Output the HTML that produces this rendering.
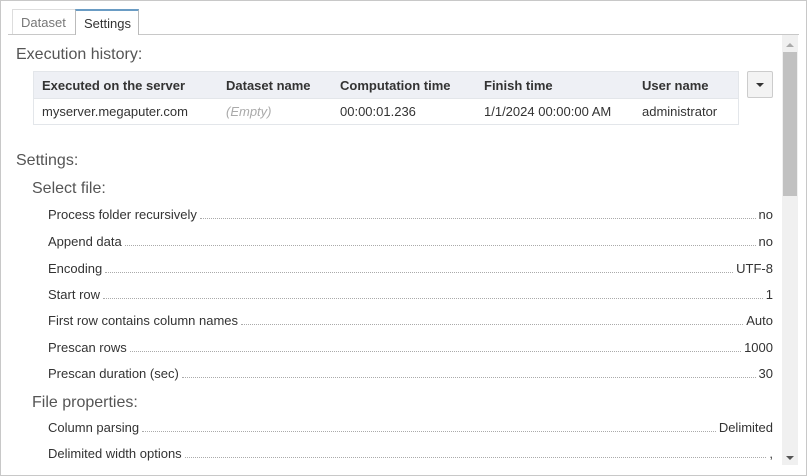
<!DOCTYPE html>
<html><head><style>
body{margin:0;width:807px;height:476px;overflow:hidden;background:#fff;font-family:"Liberation Sans",sans-serif;color:#333;}
.frame{position:absolute;left:0;top:0;width:805px;height:474px;border:1px solid #c8c8c8;}
.tab{position:absolute;top:9px;height:25px;line-height:25px;font-size:13px;padding:0 8px;box-sizing:border-box;}
.t1{left:12px;width:64px;color:#777;border:1px solid #ddd;border-bottom:none;}
.t2{left:75px;width:64px;color:#333;border:1px solid #bbb;border-top:2px solid #6a9cc4;border-bottom:none;background:#fff;z-index:2;height:26px;}
.tline{position:absolute;left:8px;right:8px;top:34px;border-top:1px solid #c8c8c8;}
.h{position:absolute;font-size:16px;color:#555;}
table{position:absolute;left:33px;top:71px;width:706px;border-collapse:collapse;font-size:13px;}
th{background:#eef0f5;text-align:left;font-weight:bold;height:26px;padding:0 0 0 8px;border-top:1px solid #e3e6ea;}
td{height:25px;padding:0 0 0 8px;border-top:1px solid #e3e6ea;border-bottom:1px solid #e3e6ea;}
table{border-left:1px solid #e3e6ea;border-right:1px solid #e3e6ea;}
.btn{position:absolute;left:747px;top:71px;width:24px;height:25px;border:1px solid #ccc;border-radius:2px;background:#f3f3f3;}
.btn:after{content:"";position:absolute;left:8px;top:11px;border:4px solid transparent;border-top:4px solid #333;border-bottom:none;}
.row{position:absolute;left:48px;width:725px;font-size:13px;display:flex;align-items:baseline;}
.row .d{flex:1;border-bottom:1px dotted #aaa;margin:0 3px;}
.sb{position:absolute;left:782px;top:35px;width:16px;height:430px;background:#f0f0f0;}
.th{position:absolute;left:783px;top:52px;width:14px;height:144px;background:#c1c1c1;}
.au{position:absolute;left:786px;top:43px;border:4px solid transparent;border-bottom:4px solid #aaa;border-top:none;}
.ad{position:absolute;left:786px;top:456px;border:4px solid transparent;border-top:4px solid #555;border-bottom:none;}
</style></head><body>
<div class="frame"></div>
<div class="tline"></div>
<div class="tab t1">Dataset</div>
<div class="tab t2">Settings</div>
<div class="h" style="left:16px;top:46px;">Execution history:</div>
<table>
<tr><th style="width:176px">Executed on the server</th><th style="width:106px">Dataset name</th><th style="width:136px">Computation time</th><th style="width:150px">Finish time</th><th>User name</th></tr>
<tr><td>myserver.megaputer.com</td><td style="color:#aaa;font-style:italic">(Empty)</td><td>00:00:01.236</td><td>1/1/2024 00:00:00 AM</td><td>administrator</td></tr>
</table>
<div class="btn"></div>
<div class="h" style="left:16px;top:152px;">Settings:</div>
<div class="h" style="left:32px;top:180px;">Select file:</div>
<div class="row" style="top:207px"><span>Process folder recursively</span><span class="d"></span><span>no</span></div>
<div class="row" style="top:234px"><span>Append data</span><span class="d"></span><span>no</span></div>
<div class="row" style="top:261px"><span>Encoding</span><span class="d"></span><span>UTF-8</span></div>
<div class="row" style="top:287px"><span>Start row</span><span class="d"></span><span>1</span></div>
<div class="row" style="top:313px"><span>First row contains column names</span><span class="d"></span><span>Auto</span></div>
<div class="row" style="top:340px"><span>Prescan rows</span><span class="d"></span><span>1000</span></div>
<div class="row" style="top:366px"><span>Prescan duration (sec)</span><span class="d"></span><span>30</span></div>
<div class="h" style="left:32px;top:394px;">File properties:</div>
<div class="row" style="top:420px"><span>Column parsing</span><span class="d"></span><span>Delimited</span></div>
<div class="row" style="top:446px"><span>Delimited width options</span><span class="d"></span><span>,</span></div>
<div class="sb"></div><div class="th"></div><div class="au"></div><div class="ad"></div>
</body></html>
